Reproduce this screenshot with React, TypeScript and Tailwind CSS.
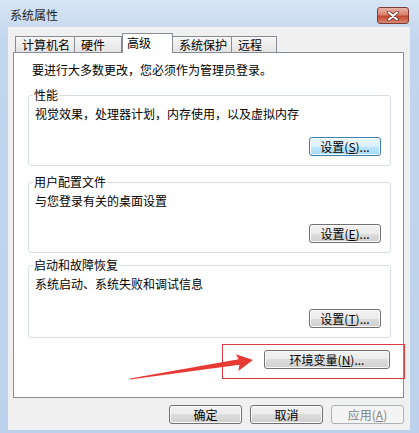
import React from 'react'

const btn =
  'h-[19px] rounded-[3px] border border-[#707070] bg-[linear-gradient(#f2f2f2,#ebebeb_50%,#dddddd_50%,#cfcfcf)] shadow-[inset_0_0_0_1px_#fbfbfb] flex items-center justify-center leading-none text-black'
const focusBtn =
  'h-[19px] rounded-[3px] border border-[#3c7fb1] bg-[linear-gradient(#eaf6fd,#d9f0fc_50%,#bee6fd_50%,#a7d9f5)] shadow-[inset_0_0_0_1px_#fbfdff] flex items-center justify-center leading-none text-black'

function Group({ title, text, h, children }: { title: string; text: string; h: string; children: React.ReactNode }) {
  return (
    <div className={`relative ${h} rounded-[3px] border border-[#d5dfe5] flex flex-col pt-[10px] pb-[9px] pr-[9px]`}>
      <span className="absolute -top-[9px] left-[4px] bg-white px-[1px] leading-[16px]">{title}</span>
      <p className="pl-[6px] leading-[16px]">{text}</p>
      <div className="mt-auto flex justify-end">{children}</div>
    </div>
  )
}

function Tab({ label, w, active, first }: { label: string; w: string; active?: boolean; first?: boolean }) {
  if (active)
    return (
      <div className={`${w} h-[20px] relative z-10 border border-b-0 border-[#898c95] bg-white pl-[4px] pt-[1px] leading-[16px]`}>{label}</div>
    )
  return (
    <div
      className={`${w} h-[16px] mb-px ${first ? '' : '-ml-px'} border border-b-0 border-[#898c95] bg-[linear-gradient(#f7f7f7,#e4e4e4)] pl-[6px] leading-[16px]`}
    >
      {label}
    </div>
  )
}

export default function App() {
  return (
    <div className="relative w-[419px] h-[433px] overflow-hidden bg-[linear-gradient(#d7e5f5,#c2d6ee_40px,#bcd1eb)] font-['Noto_Sans_CJK_SC',sans-serif] text-[12px] text-black">
      {/* title bar */}
      <div className="h-[27px] flex items-start justify-between pl-[10px] pr-[10px] pt-[6px]">
        <span className="leading-[18px] text-[#1e1e1e]">系统属性</span>
        <div className="mt-px w-[32px] h-[17px] rounded-[3px] border border-[#7b3b32] bg-[linear-gradient(#eab2a5,#d9826f_45%,#c4452f_55%,#d98a74)] flex items-center justify-center">
          <svg width="12" height="10" viewBox="0 0 12 10">
            <path d="M2 1.5 L10 8.5 M10 1.5 L2 8.5" stroke="#5a1f18" strokeWidth="3.6" strokeLinecap="round" />
            <path d="M2 1.5 L10 8.5 M10 1.5 L2 8.5" stroke="#fff" strokeWidth="2.2" strokeLinecap="round" />
          </svg>
        </div>
      </div>

      {/* client area */}
      <div className="ml-[8px] w-[402px] h-[403px] bg-[#f0f0f0] pt-[6px] pl-[5px] flex flex-col">
        <div className="flex items-end h-[20px] pl-[2px] -mb-px relative z-10">
          <Tab label="计算机名" w="w-[60px]" first />
          <Tab label="硬件" w="w-[48px]" />
          <Tab label="高级" w="w-[51px]" active />
          <Tab label="系统保护" w="w-[60px]" />
          <Tab label="远程" w="w-[46px]" />
        </div>

        <div className="w-[391px] h-[346px] border border-[#898c95] bg-white pt-[9px] pl-[14px] pr-[12px] flex flex-col">
          <p className="pl-[4px] leading-[16px]">要进行大多数更改，您必须作为管理员登录。</p>

          <div className="mt-[17px]">
            <Group title="性能" text="视觉效果，处理器计划，内存使用，以及虚拟内存" h="h-[71px]">
              <button className={`${focusBtn} w-[72px]`}>设置(<u>S</u>)...</button>
            </Group>
          </div>
          <div className="mt-[16px]">
            <Group title="用户配置文件" text="与您登录有关的桌面设置" h="h-[71px]">
              <button className={`${btn} w-[72px]`}>设置(<u>E</u>)...</button>
            </Group>
          </div>
          <div className="mt-[12px]">
            <Group title="启动和故障恢复" text="系统启动、系统失败和调试信息" h="h-[73px]">
              <button className={`${btn} w-[72px]`}>设置(<u>T</u>)...</button>
            </Group>
          </div>

          <div className="mt-[12px] flex justify-end pr-[1px]">
            <button className={`${btn} w-[126px]`}>环境变量(<u>N</u>)...</button>
          </div>
        </div>

        <div className="mt-[7px] w-[391px] flex justify-end gap-[8px]">
          <button className={`${btn} w-[73px]`}>确定</button>
          <button className={`${btn} w-[73px]`}>取消</button>
          <button className="h-[19px] w-[73px] rounded-[3px] border border-[#adb2b5] bg-[#f4f4f4] flex items-center justify-center leading-none text-[#838383]">
            应用(<u>A</u>)
          </button>
        </div>
      </div>

      {/* annotation */}
      <div className="absolute left-[222px] top-[344px] w-[183px] h-[35px] border border-[#dc3b43]" />
      <svg className="absolute inset-0 pointer-events-none" width="419" height="433" viewBox="0 0 419 433">
        <polygon
          points="130,379.6 239.4,364.8 238.4,371 253,360 236,354.3 238.6,359.3 130,378.6"
          fill="#e83a35"
        />
      </svg>
    </div>
  )
}
